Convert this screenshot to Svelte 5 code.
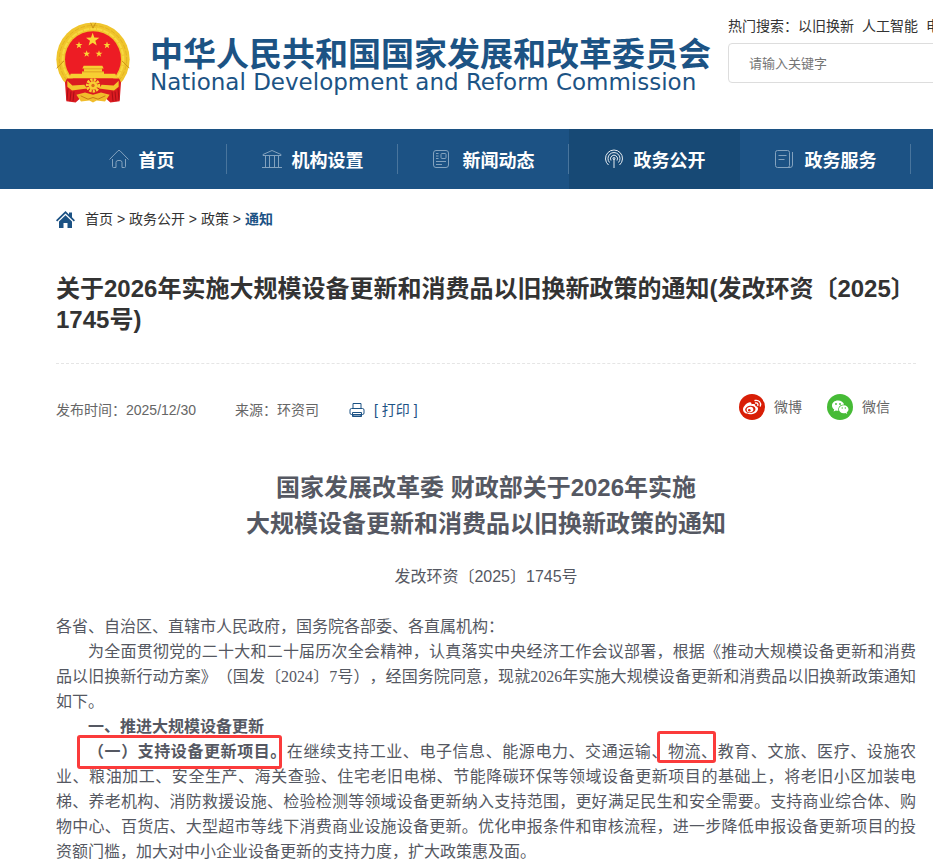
<script>
	let keyword = '';

	const hotWords = ['以旧换新', '人工智能', '电'];

	const navItems = [
		{ name: '首页', icon: 'home' },
		{ name: '机构设置', icon: 'building' },
		{ name: '新闻动态', icon: 'news' },
		{ name: '政务公开', icon: 'signal', active: true },
		{ name: '政务服务', icon: 'notebook' }
	];

	const crumbs = ['首页', '政务公开', '政策'];

	const stars = [
		[110, 53, 21],
		[69, 69, 11],
		[153, 69, 11],
		[92, 95, 11],
		[129, 95, 11]
	];

	function starPoints([cx, cy, r]) {
		return Array.from({ length: 10 }, (_, i) => {
			const radius = i % 2 ? r * 0.4 : r;
			const angle = (Math.PI / 5) * i - Math.PI / 2;
			return `${cx + radius * Math.cos(angle)},${cy + radius * Math.sin(angle)}`;
		}).join(' ');
	}
</script>

<header class="header">
	<a class="logo" href="#home">
		<svg class="emblem" viewBox="0 0 222 242" aria-hidden="true">
			<circle cx="111" cy="111" r="110" fill="#f0c52c" />
			<circle cx="111" cy="111" r="101" fill="none" stroke="#dba71f" stroke-width="2" stroke-dasharray="14 5" />
			<circle cx="111" cy="111" r="91" fill="none" stroke="#f8d941" stroke-width="6" stroke-dasharray="17 3" />
			<path d="M2 138l22-22M220 138l-22-22M104 2l7 16 8-16" fill="none" stroke="#c98f16" stroke-width="3" />
			<circle cx="111" cy="111" r="84" fill="#ed1c24" />
			{#each stars as star}
				<polygon points={starPoints(star)} fill="#fbd535" />
			{/each}
			<path d="M83 131h56l4 8h-5v9h6v9h-66v-9h6v-9h-5z" fill="#f7cf32" />
			<path d="M80 140h62M78 149h66" stroke="#d78b1c" stroke-width="2" />
			<path d="M44 155h134l5 14H39z" fill="#f7cf32" />
			<path d="M33 169h156l6 12-4 56-28 4-22-20H81l-22 20-28-4-4-56z" fill="#db1b20" />
			<path d="M34 176l15 14 36-2 8 11-45 6-14-11zM188 176l-15 14-36-2-8 11 45 6 14-11z" fill="#f3c52d" />
			<circle cx="111" cy="190" r="17" fill="none" stroke="#f8cf33" stroke-width="9" stroke-dasharray="7 3" />
			<circle cx="111" cy="190" r="13" fill="#f8cf33" />
			<circle cx="111" cy="190" r="5" fill="#dc6b1c" />
			<path d="M61 218l26-7 24 7 24-7 26 7-14 20-25-3-11 6-11-6-25 3z" fill="#f1bd2b" />
			<path d="M74 221l22 10 15-5 15 5 22-10" fill="none" stroke="#c87b17" stroke-width="3" />
			<path d="M36 199l-3 34M45 208l-3 29M54 208l-3 29M186 199l3 34M177 208l3 29M168 208l3 29" stroke="#a90e16" stroke-width="3" />
		</svg>
		<span class="logo-text">
			<span class="logo-cn">中华人民共和国国家发展和改革委员会</span>
			<span class="logo-en">National Development and Reform Commission</span>
		</span>
	</a>
	<div class="search">
		<div class="hot">
			<span>热门搜索：</span>
			{#each hotWords as word}
				<a href="#search">{word}</a>
			{/each}
		</div>
		<input type="text" aria-label="请输入关键字" placeholder="请输入关键字" bind:value={keyword} />
	</div>
</header>

<nav class="nav">
	{#each navItems as item}
		<a class="nav-item" class:active={item.active} href="#nav">
			<svg class="nav-icon" viewBox="0 0 20 20" aria-hidden="true">
				{#if item.icon === 'home'}
					<path d="M.5 10.5L9 1.8q1-1 2 0l8.500 8.700M3.500 10v7.500q0 1 1 1h2.500v-5q0-2 2-2h2q2 0 2 2v5h2.500q1 0 1-1V10" />
				{:else if item.icon === 'building'}
					<path d="M1 5.500L10 1.500l9 4v1H1zM3.500 7v11M7.500 7v11M12.500 7v11M16.500 7v11M0 18.500h20" />
				{:else if item.icon === 'news'}
					<rect x=".5" y="1.500" width="15" height="17" rx="2.500" />
					<rect x="8" y="4.500" width="5" height="5" rx="1" />
					<path d="M3 4.500h2.500M3 7h2.500M3 9.500h2.500M3 12.500h10M3 15.500h6" />
				{:else if item.icon === 'signal'}
					<path d="M4.500 16A8.500 8.500 0 1 1 15.500 16M5.500 13.500A6 6 0 1 1 14.500 13.500M7 11.500A3.500 3.500 0 1 1 13 11.500M10 9.500v9.500" />
					<circle cx="10" cy="9.500" r="1" />
				{:else}
					<rect x=".5" y="1.500" width="14" height="17" rx="2" />
					<path d="M3.500 6.500h8M3.500 10.500h6M17.500 3v13q0 2.500-2.500 2.500h-3" />
				{/if}
			</svg>
			<span>{item.name}</span>
		</a>
	{/each}
</nav>

<main class="article">
	<div class="crumbs">
		<svg class="crumb-icon" viewBox="0 0 19 17" aria-hidden="true">
			<path d="M9.500 0L13 3.400V1.500h3v4.800l3 3-1.200 1.200L9.500 2.600l-8.300 7.900L0 9.300z" />
			<path d="M9.500 4.300l6.500 6.200V17h-4.500v-5h-4v5H3v-6.500z" />
		</svg>
		<div>
			{#each crumbs as crumb}
				<a href="#crumb">{crumb}</a>&nbsp;&gt;&nbsp;{/each}<a class="current" href="#crumb">通知</a>
		</div>
	</div>

	<h1>关于2026年实施大规模设备更新和消费品以旧换新政策的通知(发改环资〔2025〕1745号)</h1>

	<div class="meta">
		<span class="date">发布时间：2025/12/30</span>
		<span class="source">来源：环资司</span>
		<button class="print" type="button">
			<svg viewBox="0 0 16 16" aria-hidden="true">
				<path d="M4 6V1.500h8V6M3.500 12.500h-1q-1.500 0-1.500-1.500V8q0-1.500 1.500-1.500h11Q15 6.500 15 8v3q0 1.500-1.500 1.500h-1M3.500 10.500h9v4h-9z" />
				<path d="M4 12.500h8v2H4z" fill="#7f9fbe" />
			</svg>
			<span>[ 打印 ]</span>
		</button>
		<div class="share">
			<a href="#weibo">
				<svg viewBox="0 0 26 26" aria-hidden="true">
					<circle cx="13" cy="13" r="13" fill="#d81e06" />
					<path d="M4 15.500c0-3 4-7 7-7.200 1.500 0 1.700 1 1.300 2 2-.7 4.600-.5 4 1.700 2 .5 3 1.500 2.700 3.200-.4 3-4 5-8 5-4 0-7-1.700-7-4.700z" fill="#fff" />
					<ellipse cx="11.300" cy="15.400" rx="5.200" ry="3.600" fill="#d81e06" transform="rotate(-8 11.300 15.400)" />
					<ellipse cx="11" cy="15.700" rx="3.400" ry="2.700" fill="#fff" transform="rotate(-15 11 15.700)" />
					<circle cx="10.300" cy="16.200" r="1.300" fill="#d81e06" />
					<path d="M16 6.500c3.800-.8 6.500 2 5.300 5.600M16.500 9c1.800-.3 2.800.8 2.300 2.500" fill="none" stroke="#fff" stroke-width="1.300" stroke-linecap="round" />
				</svg>
				<span>微博</span>
			</a>
			<a href="#wechat">
				<svg viewBox="0 0 26 26" aria-hidden="true">
					<circle cx="13" cy="13" r="13" fill="#46bb36" />
					<path d="M11 6.500c-3.500 0-6 2.300-6 5.100 0 1.700.8 3 2.200 4l-.6 2 2.300-1.200c.8.200 1.500.3 2.500.3-.8-3.400 2-6.300 5.700-6.100-.5-2.400-3-4.100-6.100-4.100z" fill="#fff" />
					<path d="M16.700 11.200c-2.700 0-4.800 1.800-4.800 4s2 4 4.800 4c.6 0 1.200-.1 1.700-.3l1.800 1-.5-1.700c1.100-.7 1.800-1.800 1.800-3 0-2.200-2.100-4-4.800-4z" fill="#fff" />
					<g fill="#46bb36">
						<circle cx="9" cy="10" r=".9" />
						<circle cx="13" cy="10" r=".9" />
						<circle cx="15.200" cy="14" r=".7" />
						<circle cx="18.300" cy="14" r=".7" />
					</g>
				</svg>
				<span>微信</span>
			</a>
		</div>
	</div>

	<h2>国家发展改革委 财政部关于2026年实施<br />大规模设备更新和消费品以旧换新政策的通知</h2>
	<p class="doc-no">发改环资〔2025〕1745号</p>

	<div class="content">
		<p>各省、自治区、直辖市人民政府，国务院各部委、各直属机构：</p>
		<p class="indent">为全面贯彻党的二十大和二十届历次全会精神，认真落实中央经济工作会议部署，根据《推动大规模设备更新和消费品以旧换新行动方案》（国发〔2024〕7号），经国务院同意，现就2026年实施大规模设备更新和消费品以旧换新政策通知如下。</p>
		<p class="indent"><strong>一、推进大规模设备更新</strong></p>
		<p>
			<span class="first-line"><strong class="mark mark-title">（一）支持设备更新项目。</strong>在继续支持工业、电子信息、能源电力、交通运输、<span class="mark mark-word">物流、</span>教育、文旅、医疗、设施农</span>业、粮油加工、安全生产、海关查验、住宅老旧电梯、节能降碳环保等领域设备更新项目的基础上，将老旧小区加装电梯、养老机构、消防救援设施、检验检测等领域设备更新纳入支持范围，更好满足民生和安全需要。支持商业综合体、购物中心、百货店、大型超市等线下消费商业设施设备更新。优化申报条件和审核流程，进一步降低申报设备更新项目的投资额门槛，加大对中小企业设备更新的支持力度，扩大政策惠及面。
		</p>
	</div>
</main>

<style>
	:global(body) {
		margin: 0;
		background: #fff;
		color: #333;
		font-family: "Liberation Sans", "Noto Sans CJK SC", sans-serif;
		font-size: 14px;
		overflow-x: hidden;
	}

	a {
		color: inherit;
		text-decoration: none;
	}

	h1,
	h2,
	p {
		margin: 0;
	}

	.header {
		display: flex;
		align-items: flex-start;
		gap: 17px;
		box-sizing: border-box;
		min-height: 129px;
		padding-left: 56px;
		overflow: hidden;
	}

	.logo {
		display: flex;
		flex: none;
		gap: 20px;
		padding-top: 22px;
		color: #1c5384;
	}

	.emblem {
		width: 74px;
		height: 81px;
	}

	.logo-text {
		display: flex;
		flex-direction: column;
		padding-top: 16px;
		white-space: nowrap;
	}

	.logo-cn {
		font-size: 33px;
		line-height: 34px;
		font-weight: 700;
	}

	.logo-en {
		font-family: "DejaVu Sans", sans-serif;
		font-size: 23px;
		line-height: 20px;
	}

	.search {
		flex: none;
		width: 280px;
		padding-top: 16px;
	}

	.hot {
		display: flex;
		line-height: 20px;
		white-space: nowrap;
	}

	.hot a {
		margin-right: 8px;
	}

	.search input {
		box-sizing: border-box;
		width: 100%;
		height: 40px;
		margin-top: 7px;
		padding: 0 20px;
		border: 1px solid #ddd;
		border-radius: 4px;
		font-family: inherit;
		font-size: 13px;
		outline: none;
	}

	.search input::placeholder {
		color: #757575;
	}

	.nav {
		display: flex;
		height: 60px;
		padding-left: 56px;
		background: #1c5284;
		overflow: hidden;
	}

	.nav-item {
		display: flex;
		flex: none;
		align-items: center;
		justify-content: center;
		gap: 10px;
		position: relative;
		width: 171px;
		color: #fff;
		font-size: 18px;
		font-weight: 700;
	}

	.nav-item::after {
		content: '';
		position: absolute;
		top: 15px;
		right: 0;
		width: 1px;
		height: 30px;
		background: #49759d;
	}

	.nav-item.active {
		background: #174975;
	}

	.nav-item.active::after {
		display: none;
	}

	.nav-icon {
		width: 20px;
		height: 20px;
		fill: none;
		stroke: #83a2be;
		stroke-width: 1;
	}

	.active .nav-icon {
		stroke: #e4ebf1;
	}

	.article {
		padding: 0 17px 0 56px;
	}

	.crumbs {
		display: flex;
		align-items: center;
		gap: 10px;
		padding-top: 20px;
		line-height: 20px;
	}

	.crumb-icon {
		width: 19px;
		height: 17px;
		fill: #1c5284;
	}

	.current {
		color: #1c5284;
		font-weight: 700;
	}

	h1 {
		padding: 44px 0 28px;
		border-bottom: 1px dashed #e5e5e5;
		font-size: 24px;
		line-height: 31px;
		text-spacing-trim: space-all;
	}

	.meta {
		display: flex;
		align-items: flex-end;
		padding: 30px 26px 0 0;
		color: #666;
		line-height: 20px;
	}

	.source {
		margin-left: 39px;
	}

	.print {
		display: flex;
		align-items: center;
		gap: 9px;
		margin-left: 30px;
		padding: 0;
		border: 0;
		background: none;
		color: #1c5284;
		font: inherit;
		line-height: 20px;
		cursor: pointer;
	}

	.print svg {
		width: 16px;
		height: 16px;
		fill: none;
		stroke: #1c5284;
		stroke-width: 1;
	}

	.share {
		display: flex;
		gap: 25px;
		margin-left: auto;
	}

	.share a {
		display: flex;
		align-items: center;
		gap: 9px;
	}

	.share svg {
		width: 26px;
		height: 26px;
	}

	h2 {
		padding-top: 50px;
		color: #555862;
		font-size: 24px;
		line-height: 36px;
		text-align: center;
	}

	.doc-no {
		padding-top: 22px;
		color: #555862;
		font-size: 16px;
		line-height: 25px;
		text-align: center;
		text-spacing-trim: space-all;
	}

	.content {
		padding-top: 25px;
		color: #555862;
		font-family: "Liberation Serif", "Noto Sans CJK SC", serif;
		font-size: 16px;
		line-height: 25px;
		text-align: justify;
		text-spacing-trim: space-all;
	}

	.content strong {
		font-weight: 700;
	}

	.indent {
		text-indent: 2em;
	}

	.first-line {
		display: block;
		padding-left: 2em;
		text-align-last: justify;
	}

	/* red frames drawn over the text */
	.mark {
		position: relative;
	}

	.mark::after {
		content: '';
		position: absolute;
		border: 3px solid #fb3b3b;
		border-radius: 3px;
	}

	.mark-title::after {
		inset: -8px 5px -9px -11px;
	}

	.mark-word::after {
		inset: -12px 2px -3px -11px;
	}
</style>
